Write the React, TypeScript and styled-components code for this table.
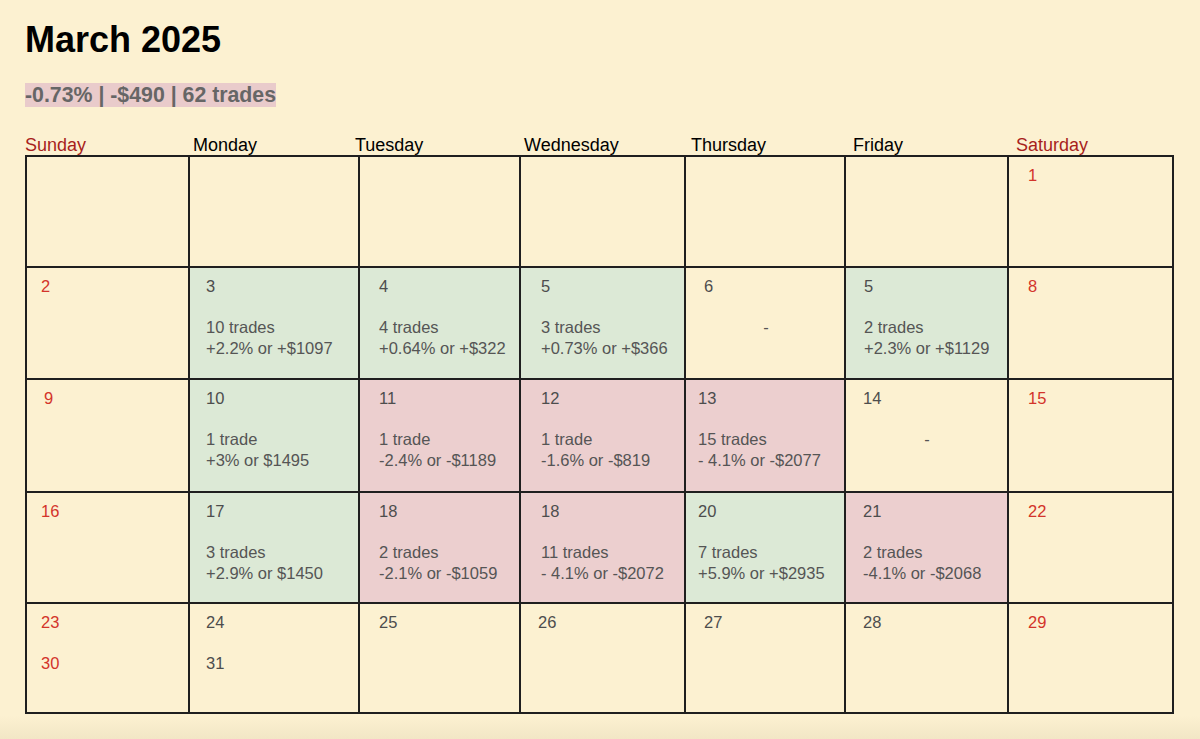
import React from 'react';
import styled, { createGlobalStyle } from 'styled-components';

type Tone = 'none' | 'win' | 'loss';

type DayCell = {
    day?: string;
    second?: string;
    tone?: Tone;
    trades?: string;
    pnl?: string;
    dash?: boolean;
    indent?: number;
};

const GlobalStyle = createGlobalStyle`
    html, body {
        margin: 0;
        padding: 0;
    }
    body {
        font-family: 'Liberation Sans', Arial, Helvetica, sans-serif;
        background: #fcf1d1;
    }
`;

const Page = styled.div`
    min-height: 100vh;
    box-sizing: border-box;
    padding: 22px 25px 0;
    background: linear-gradient(to bottom, #fcf1d1 0, #fcf1d1 716px, #f2e6c5 739px);
`;

const Title = styled.h1`
    margin: 0;
    font-size: 36px;
    line-height: 36px;
    font-weight: 700;
    color: #000;
`;

const Summary = styled.div`
    margin-top: 25px;
    font-size: 21.3px;
    line-height: 24px;
    font-weight: 700;
    color: #666;
    span {
        background: #e9cbcb;
    }
`;

const HeaderRow = styled.div`
    margin-top: 28px;
    display: grid;
    grid-template-columns: 168px 162px 169px 167px 162px 163px 1fr;
    font-size: 18px;
    line-height: 20px;
`;

const HeaderLabel = styled.div<{ $weekend?: boolean }>`
    color: ${(p) => (p.$weekend ? '#a81f1c' : '#000')};
`;

const Grid = styled.div`
    display: grid;
    width: max-content;
    grid-template-columns: 163px 170px 161px 165px 160px 163px 165px;
    grid-template-rows: 111px 112px 113px 111px 110px;
    border-top: 2px solid #1f1f1f;
    border-left: 2px solid #1f1f1f;
`;

const toneColors: Record<Tone, string> = {
    none: 'transparent',
    win: '#dce9d6',
    loss: '#eccfcf',
};

const Cell = styled.div<{ $tone: Tone; $indent: number }>`
    box-sizing: border-box;
    border-right: 2px solid #1f1f1f;
    border-bottom: 2px solid #1f1f1f;
    background: ${(p) => toneColors[p.$tone]};
    padding: 8px 6px 0 ${(p) => p.$indent}px;
    font-size: 16.5px;
    line-height: 20.5px;
    color: #555;
`;

const DayNum = styled.div<{ $weekend?: boolean }>`
    color: ${(p) => (p.$weekend ? '#d3342a' : '#4d4d4d')};
`;

const Blank = styled.div`
    height: 20.5px;
`;

const Dash = styled.div`
    text-align: center;
    padding-right: 10px;
`;

const headers = ['Sunday', 'Monday', 'Tuesday', 'Wednesday', 'Thursday', 'Friday', 'Saturday'];
const indents = [14, 16, 19, 20, 18, 18, 19];

const weeks: DayCell[][] = [
    [{}, {}, {}, {}, {}, {}, { day: '1' }],
    [
        { day: '2' },
        { day: '3', tone: 'win', trades: '10 trades', pnl: '+2.2% or +$1097' },
        { day: '4', tone: 'win', trades: '4 trades', pnl: '+0.64% or +$322' },
        { day: '5', tone: 'win', trades: '3 trades', pnl: '+0.73% or +$366' },
        { day: '6', dash: true },
        { day: '5', tone: 'win', trades: '2 trades', pnl: '+2.3% or +$1129' },
        { day: '8' },
    ],
    [
        { day: '9', indent: 17 },
        { day: '10', tone: 'win', trades: '1 trade', pnl: '+3% or $1495' },
        { day: '11', tone: 'loss', trades: '1 trade', pnl: '-2.4% or -$1189' },
        { day: '12', tone: 'loss', trades: '1 trade', pnl: '-1.6% or -$819' },
        { day: '13', tone: 'loss', trades: '15 trades', pnl: '- 4.1% or -$2077', indent: 12 },
        { day: '14', dash: true, indent: 17 },
        { day: '15' },
    ],
    [
        { day: '16' },
        { day: '17', tone: 'win', trades: '3 trades', pnl: '+2.9% or $1450' },
        { day: '18', tone: 'loss', trades: '2 trades', pnl: '-2.1% or -$1059' },
        { day: '18', tone: 'loss', trades: '11 trades', pnl: '- 4.1% or -$2072' },
        { day: '20', tone: 'win', trades: '7 trades', pnl: '+5.9% or +$2935', indent: 12 },
        { day: '21', tone: 'loss', trades: '2 trades', pnl: '-4.1% or -$2068', indent: 17 },
        { day: '22' },
    ],
    [
        { day: '23', second: '30' },
        { day: '24', second: '31' },
        { day: '25' },
        { day: '26', indent: 17 },
        { day: '27' },
        { day: '28', indent: 17 },
        { day: '29' },
    ],
];

const CalendarCell: React.FC<{ cell: DayCell; col: number }> = ({ cell, col }) => {
    const weekend = col === 0 || col === 6;
    return (
        <Cell $tone={cell.tone ?? 'none'} $indent={cell.indent ?? indents[col]}>
            {cell.day && <DayNum $weekend={weekend}>{cell.day}</DayNum>}
            {cell.second && (
                <>
                    <Blank />
                    <DayNum $weekend={weekend}>{cell.second}</DayNum>
                </>
            )}
            {cell.trades && (
                <>
                    <Blank />
                    <div>{cell.trades}</div>
                    <div>{cell.pnl}</div>
                </>
            )}
            {cell.dash && (
                <>
                    <Blank />
                    <Dash>-</Dash>
                </>
            )}
        </Cell>
    );
};

const App: React.FC = () => {
    return (
        <Page>
            <GlobalStyle />
            <Title>March 2025</Title>
            <Summary>
                <span>-0.73% | -$490 | 62 trades</span>
            </Summary>
            <HeaderRow>
                {headers.map((h, i) => (
                    <HeaderLabel key={h} $weekend={i === 0 || i === 6}>
                        {h}
                    </HeaderLabel>
                ))}
            </HeaderRow>
            <Grid>
                {weeks.map((week, w) =>
                    week.map((cell, c) => <CalendarCell key={`${w}-${c}`} cell={cell} col={c} />)
                )}
            </Grid>
        </Page>
    );
};

export default App;
